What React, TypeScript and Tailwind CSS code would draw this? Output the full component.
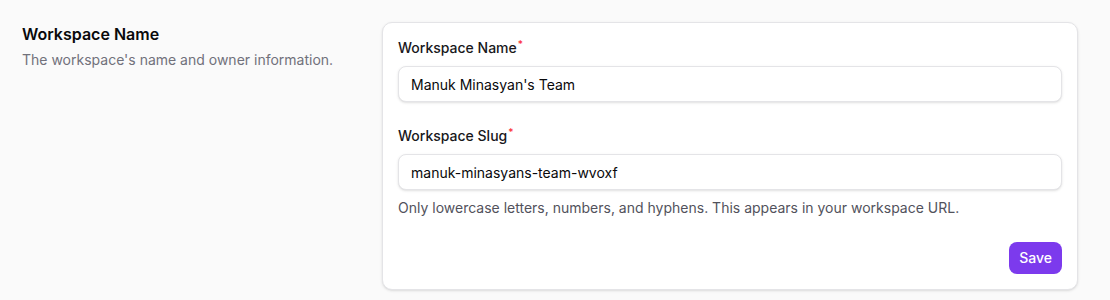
import React from 'react';

const Label: React.FC<{ children: React.ReactNode }> = ({ children }) => (
    <label className="block h-5 text-sm font-medium leading-5 text-zinc-900">
        {children}
        <span className="relative -top-[5px] ml-px align-baseline text-[10px] leading-none text-red-500">*</span>
    </label>
);

export default function App() {
    return (
        <div className="min-h-[300px] bg-[#fafafa] pl-[22px] pt-[22px] pb-[10px] font-['Inter',sans-serif]">
            <div className="flex gap-[32px]">
                <div className="w-[328px] shrink-0">
                    <h2 className="text-base font-semibold leading-6 text-zinc-950">Workspace Name</h2>
                    <p className="mt-1 text-sm leading-5 text-zinc-500">The workspace's name and owner information.</p>
                </div>
                <div className="w-[696px] rounded-[10px] border border-zinc-200 bg-white p-[15px] shadow-sm">
                    <div className="flex flex-col gap-2">
                        <Label>Workspace Name</Label>
                        <input
                            defaultValue="Manuk Minasyan's Team"
                            className="h-9 w-full rounded-lg border border-zinc-200 bg-white px-3 text-sm text-zinc-950 shadow-sm outline-none"
                        />
                    </div>
                    <div className="mt-6 flex flex-col gap-2">
                        <Label>Workspace Slug</Label>
                        <input
                            defaultValue="manuk-minasyans-team-wvoxf"
                            className="h-9 w-full rounded-lg border border-zinc-200 bg-white px-3 text-sm text-zinc-950 shadow-sm outline-none"
                        />
                        <p className="text-sm leading-5 text-zinc-600">Only lowercase letters, numbers, and hyphens. This appears in your workspace URL.</p>
                    </div>
                    <div className="mt-6 flex justify-end">
                        <button className="h-8 rounded-lg bg-[#7c3aed] px-[10px] text-sm font-medium text-white">Save</button>
                    </div>
                </div>
            </div>
        </div>
    );
}
